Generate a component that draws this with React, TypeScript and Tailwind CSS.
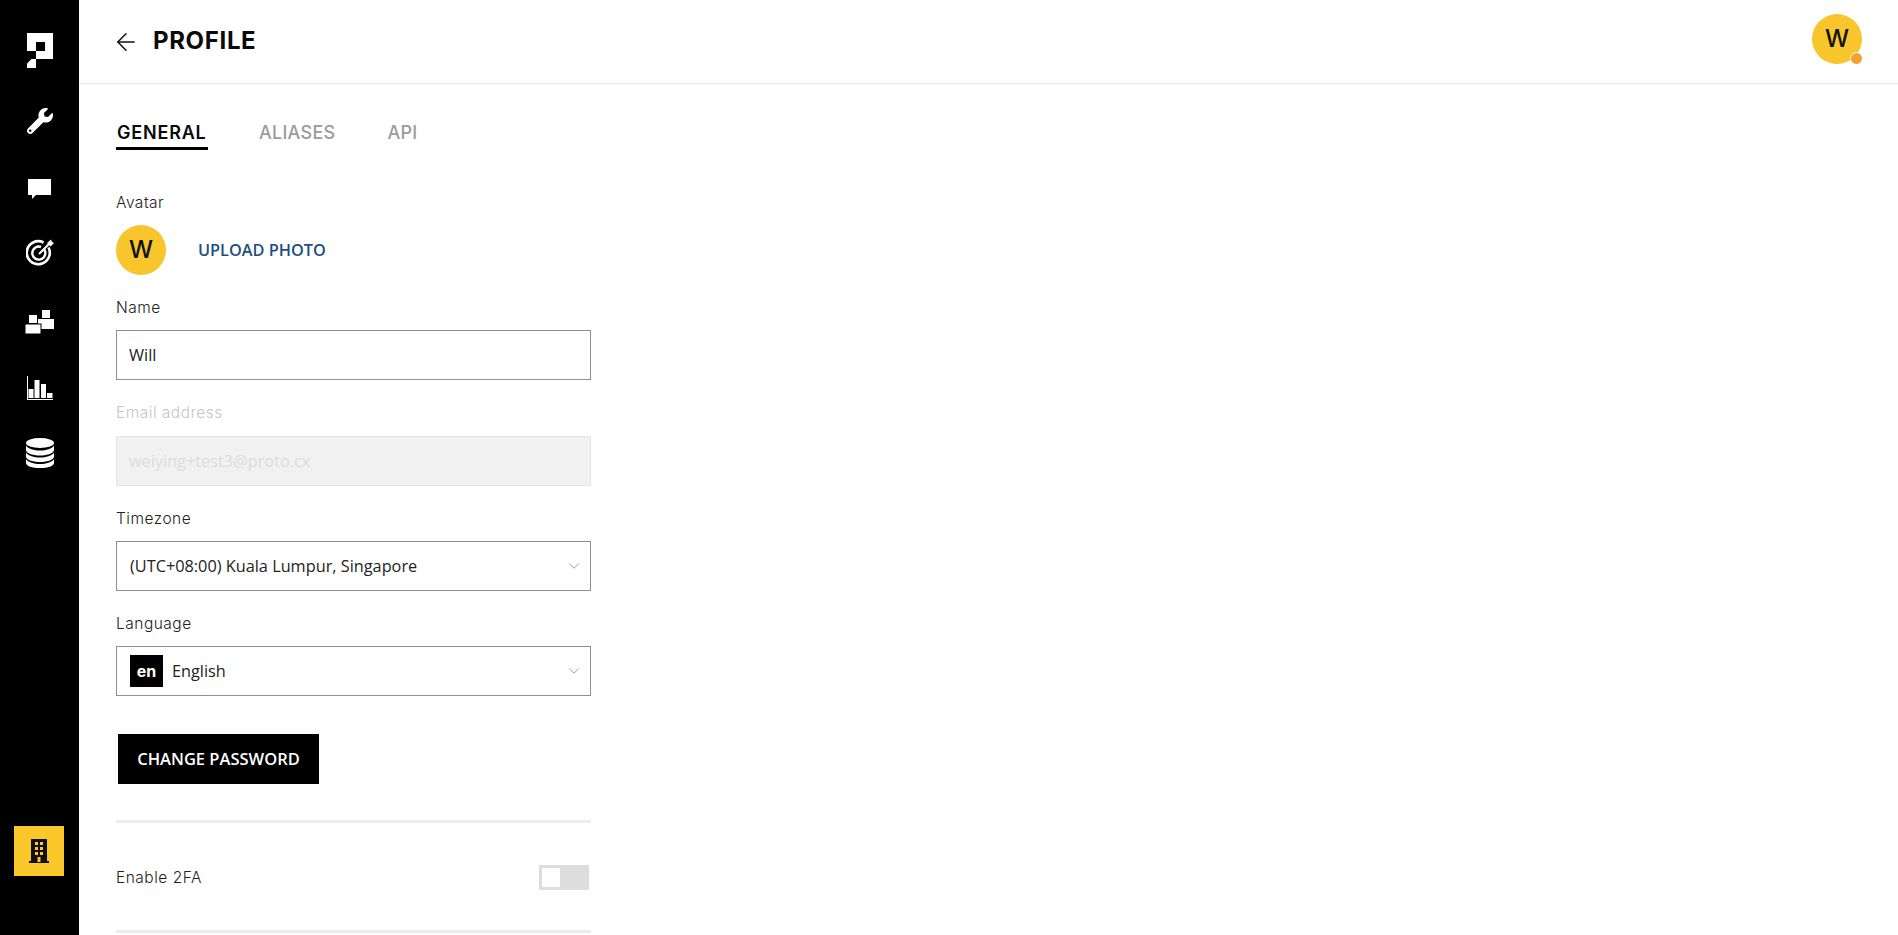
import { ArrowLeft, ChevronDown } from "lucide-react";
import { FaWrench } from "react-icons/fa";

const HEADING_FONT = "font-['Inter','Noto_Sans',sans-serif]";

function LogoIcon() {
  return (
    <svg width="26" height="35" viewBox="0 0 26 35" fill="#fff">
      <path fillRule="evenodd" d="M0 0H26V26H9V18H0ZM9 9V18H18V9Z" />
      <path d="M9 26V35H0V30.5L4.5 26Z" />
    </svg>
  );
}

function ChatIcon() {
  return (
    <svg width="23" height="20" viewBox="0 0 23 20" fill="#fff">
      <path d="M0 0H23V16H8L4 20V16H0Z" />
    </svg>
  );
}

function TargetIcon() {
  return (
    <svg width="28" height="28" viewBox="0 0 28 28" fill="none" stroke="#fff">
      <path d="M22.5 8.5A11.5 11.5 0 1 1 17.5 3.5" strokeWidth="2.6" />
      <path d="M18.2 10.5A6.5 6.5 0 1 1 15 8" strokeWidth="2.4" />
      <path d="M13 15L24 4" strokeWidth="2" />
      <path d="M21 4L25 0.5L26 3L28 4L24.5 7.5Z" fill="#fff" stroke="none" />
    </svg>
  );
}

function BlocksIcon() {
  return (
    <svg width="29" height="24" viewBox="0 0 29 24" fill="#fff">
      <rect x="17" y="0" width="8" height="8" />
      <rect x="4" y="5" width="8" height="8" />
      <rect x="13" y="9" width="16" height="10" />
      <rect x="0" y="14" width="16" height="10" stroke="#000" strokeWidth="1" />
    </svg>
  );
}

function ChartIcon() {
  return (
    <svg width="26" height="24" viewBox="0 0 26 24" fill="#fff">
      <rect x="0" y="0" width="1" height="24" />
      <rect x="0" y="23" width="26" height="1" />
      <rect x="1.5" y="13" width="5" height="9" />
      <rect x="7.5" y="4" width="5" height="18" />
      <rect x="14" y="8" width="5" height="14" />
      <rect x="20" y="17" width="5.5" height="5" />
    </svg>
  );
}

function DatabaseIcon() {
  return (
    <svg width="28" height="30" viewBox="0 0 28 30" fill="#fff">
      <ellipse cx="14" cy="5" rx="14" ry="5" />
      <path d="M0 7.5C2 11 8 12.5 14 12.5S26 11 28 7.5V12C28 15 22 17.5 14 17.5S0 15 0 12Z" />
      <path d="M0 14.5C2 18 8 19.5 14 19.5S26 18 28 14.5V18.5C28 21.5 22 24 14 24S0 21.5 0 18.5Z" />
      <path d="M0 21C2 24.5 8 26 14 26S26 24.5 28 21V25C28 28 22 30 14 30S0 28 0 25Z" />
    </svg>
  );
}

function BuildingIcon() {
  return (
    <svg width="20" height="24" viewBox="0 0 20 24" fill="#111">
      <path d="M2 0H18V22H20V24H0V22H2Z" />
      <g fill="#fcc72b">
        <rect x="6" y="3" width="3" height="3" />
        <rect x="11" y="3" width="3" height="3" />
        <rect x="6" y="8" width="3" height="3" />
        <rect x="11" y="8" width="3" height="3" />
        <rect x="6" y="13" width="3" height="3" />
        <rect x="11" y="13" width="3" height="3" />
        <rect x="8.5" y="18" width="3" height="5" />
      </g>
    </svg>
  );
}

function Sidebar() {
  return (
    <aside className="flex h-full w-[79px] shrink-0 flex-col items-center bg-black">
      <div className="flex h-[66px] mt-[17px] w-full items-center justify-center">
        <LogoIcon />
      </div>
      <div className="flex h-[76px] w-full items-center justify-center">
        <FaWrench size={26} color="#fff" />
      </div>
      <div className="flex h-[60px] w-full items-center justify-center">
        <ChatIcon />
      </div>
      <div className="flex h-[68px] w-full items-center justify-center">
        <TargetIcon />
      </div>
      <div className="flex h-[70px] w-full items-center justify-center">
        <BlocksIcon />
      </div>
      <div className="flex h-[62px] w-full items-center justify-center">
        <ChartIcon />
      </div>
      <div className="flex h-[68px] w-full items-center justify-center">
        <DatabaseIcon />
      </div>
      <div className="mt-auto mb-[59px] ml-[14px] flex h-[50px] w-[50px] items-center justify-center self-start bg-[#fcc72b]">
        <BuildingIcon />
      </div>
    </aside>
  );
}

function Avatar() {
  return (
    <div
      className={`flex h-[50px] w-[50px] items-center justify-center rounded-full bg-[#f8c52c] text-[24px] font-medium text-[#111] ${HEADING_FONT}`}
    >
      W
    </div>
  );
}

function FieldLabel({ children, muted }: { children: string; muted?: boolean }) {
  return (
    <div
      className={`h-5 text-[15.5px] font-light leading-5 tracking-[0.5px] ${HEADING_FONT} ${
        muted ? "mb-[13px] text-[#c4c4c4]" : "mb-[12px] text-[#222]"
      }`}
    >
      {children}
    </div>
  );
}

export default function App() {
  return (
    <div className="flex h-screen overflow-hidden bg-white font-['Open_Sans',sans-serif]">
      <Sidebar />
      <div className="flex min-w-0 flex-1 flex-col">
        <header className="flex h-[84px] shrink-0 items-center border-b border-[#e6e6e6] pl-[33px] pr-[36px]">
          <ArrowLeft size={28} strokeWidth={1.3} color="#111" />
          <h1 className={`-mt-px ml-[13px] text-[24px] font-bold tracking-[0.65px] text-[#0a0a0a] ${HEADING_FONT}`}>PROFILE</h1>
          <div className="relative -mt-[5px] ml-auto">
            <Avatar />
            <span className="absolute bottom-[-1px] right-[-1px] h-[13px] w-[13px] rounded-full border border-white bg-[#f5a033]" />
          </div>
        </header>

        <main className="w-[512px] pl-[37px]">
          <nav className={`mt-[33px] flex text-[18px] font-medium tracking-[0.25px] ${HEADING_FONT}`}>
            <div className="h-[33px] w-[92px] border-b-[3px] border-black pl-px pt-px font-semibold leading-[30px] tracking-[0.8px] text-[#0a0a0a]">
              GENERAL
            </div>
            <div className="ml-[51px] pt-px leading-[30px] text-[#9b9b9b]">ALIASES</div>
            <div className="ml-[52px] pt-px leading-[30px] text-[#9b9b9b]">API</div>
          </nav>

          <div className="mt-[43px]">
            <FieldLabel>Avatar</FieldLabel>
            <div className="flex items-center">
              <Avatar />
              <button className="ml-[32px] text-[16.3px] font-semibold text-[#1f4e7e]">UPLOAD PHOTO</button>
            </div>
          </div>

          <div className="mt-[23px]">
            <FieldLabel>Name</FieldLabel>
            <input
              readOnly
              value="Will"
              className="block h-[50px] w-[475px] border border-[#8f8f8f] px-3 text-[16.3px] text-[#222] outline-none"
            />
          </div>

          <div className="mt-[23px]">
            <FieldLabel muted>Email address</FieldLabel>
            <input
              readOnly
              disabled
              value="weiying+test3@proto.cx"
              className="block h-[50px] w-[475px] border border-[#e4e4e4] bg-[#f1f1f1] px-3 text-[16.3px] text-[#dcdcdc] outline-none"
            />
          </div>

          <div className="mt-[23px]">
            <FieldLabel>Timezone</FieldLabel>
            <div className="flex h-[50px] w-[475px] items-center border border-[#8f8f8f] pl-[13px] pr-[7px] text-[16.3px] text-[#222]">
              <span>(UTC+08:00) Kuala Lumpur, Singapore</span>
              <ChevronDown size={18} strokeWidth={1} color="#777" className="ml-auto" />
            </div>
          </div>

          <div className="mt-[23px]">
            <FieldLabel>Language</FieldLabel>
            <div className="flex h-[50px] w-[475px] items-center border border-[#8f8f8f] pl-[13px] pr-[7px] text-[16.3px] text-[#222]">
              <span
                className={`flex h-8 w-[33px] items-center justify-center bg-black text-[16px] font-bold text-white ${HEADING_FONT}`}
              >
                en
              </span>
              <span className="ml-[9px]">English</span>
              <ChevronDown size={18} strokeWidth={1} color="#777" className="ml-auto" />
            </div>
          </div>

          <button className="mt-[38px] ml-[2px] block h-[50px] w-[201px] bg-black text-[16.5px] font-semibold text-white">
            CHANGE PASSWORD
          </button>

          <div className="mt-[36px] h-[3px] w-[475px] bg-[#ececec]" />

          <div className="mt-[42px] flex w-[475px] items-center justify-between pr-[2px]">
            <span className={`text-[15.5px] font-light tracking-[0.5px] text-[#222] ${HEADING_FONT}`}>Enable 2FA</span>
            <div className="flex h-[25px] w-[50px] items-center bg-[#dddddd] pl-[3px]">
              <div className="h-[19px] w-[18px] bg-white" />
            </div>
          </div>

          <div className="mt-[40px] h-[3px] w-[475px] bg-[#ececec]" />
        </main>
      </div>
    </div>
  );
}
